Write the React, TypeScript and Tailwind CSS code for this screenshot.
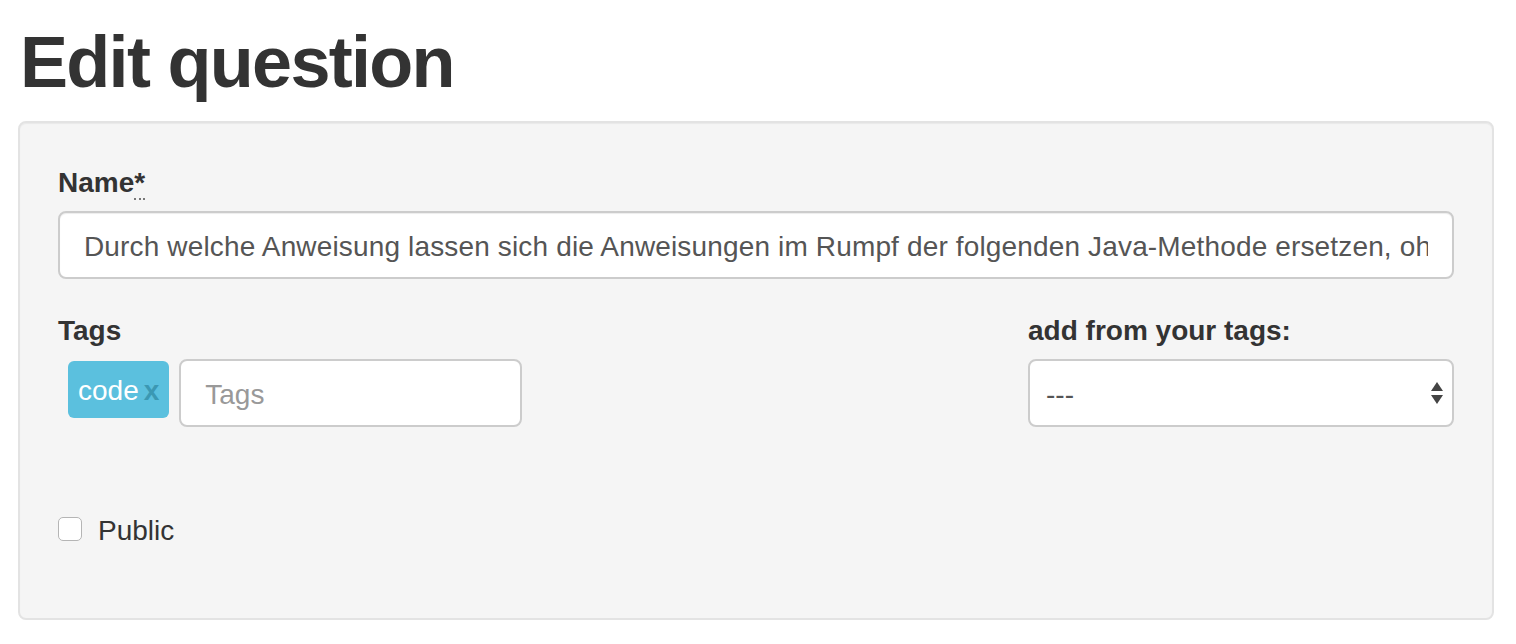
import React from "react";

const font = { fontFamily: '"Liberation Sans", Arial, Helvetica, sans-serif' };

function SelectArrows() {
  return (
    <svg
      className="pointer-events-none absolute right-[10px] top-1/2 -translate-y-1/2"
      width="14"
      height="28"
      viewBox="0 0 14 28"
    >
      <path d="M7 3 L13 12 L1 12 Z" fill="#444" />
      <path d="M1 16 L13 16 L7 25 Z" fill="#444" />
    </svg>
  );
}

export default function App() {
  return (
    <div className="min-h-screen bg-white text-[#333]" style={font}>
      <div className="pl-[18px] pr-[22px]">
        <h1 className="mt-[23px] mb-[19px] pl-[2px] text-[72px] font-bold leading-[79px] tracking-[-1.7px] text-[#333]">
          Edit question
        </h1>

        <div className="rounded-[8px] border-2 border-[#e3e3e3] bg-[#f5f5f5] px-[38px] pt-[38px] pb-[69px] shadow-[inset_0_1px_1px_rgba(0,0,0,0.05)]">
          {/* Name */}
          <div className="mb-[30px]">
            <label className="mb-[8px] block pt-[2px] text-[28px] font-bold leading-[40px]">
              Name
              <abbr title="required" className="no-underline">
                <span className="border-b-2 border-dotted border-[#777] leading-[24px]">*</span>
              </abbr>
            </label>
            <input
              readOnly
              defaultValue="Durch welche Anweisung lassen sich die Anweisungen im Rumpf der folgenden Java-Methode ersetzen, ohne dass sich das Verhalten ändert?"
              className="block h-[68px] w-full rounded-[8px] border-2 border-[#ccc] bg-white px-[24px] pt-[3px] text-[28px] tracking-[0.15px] text-[#555] shadow-[inset_0_1px_1px_rgba(0,0,0,0.075)] outline-none"
              style={font}
            />
          </div>

          {/* Tags row */}
          <div className="grid grid-cols-[970px_1fr]">
            <div className="pr-[30px]">
              <label className="mb-[8px] block pt-[2px] text-[28px] font-bold leading-[40px]">Tags</label>
              <div className="flex h-[68px] items-start gap-[10px] pl-[10px]">
                <span className="mt-[2px] flex h-[57px] items-center rounded-[6px] bg-[#5bc0de] pl-[10px] pr-[10px] pt-[2px] text-[28px] leading-none text-white">
                  code
                  <span className="ml-[5px] font-bold text-[#3b98b3]">x</span>
                </span>
                <input
                  readOnly
                  placeholder="Tags"
                  className="h-[68px] w-[343px] rounded-[8px] border-2 border-[#ccc] bg-white px-[24px] pt-[3px] text-[28px] text-[#555] outline-none placeholder:text-[#999]"
                  style={font}
                />
              </div>
            </div>
            <div>
              <label className="mb-[8px] block pt-[2px] text-[28px] font-bold leading-[40px]">add from your tags:</label>
              <div className="relative">
                <select
                  defaultValue=""
                  className="block h-[68px] w-full appearance-none rounded-[8px] border-2 border-[#ccc] bg-white pl-[16px] pr-[40px] pt-[3px] text-[28px] text-[#555] outline-none"
                  style={font}
                >
                  <option value="">---</option>
                </select>
                <SelectArrows />
              </div>
            </div>
          </div>

          {/* Public checkbox */}
          <div className="mt-[82px] flex h-[40px] items-center">
            <span className="block h-[24px] w-[24px] rounded-[5px] border border-[#b5b5b5] bg-white" />
            <span className="ml-[16px] pt-[3px] text-[28px] leading-[40px] text-[#333]">Public</span>
          </div>
        </div>
      </div>
    </div>
  );
}
